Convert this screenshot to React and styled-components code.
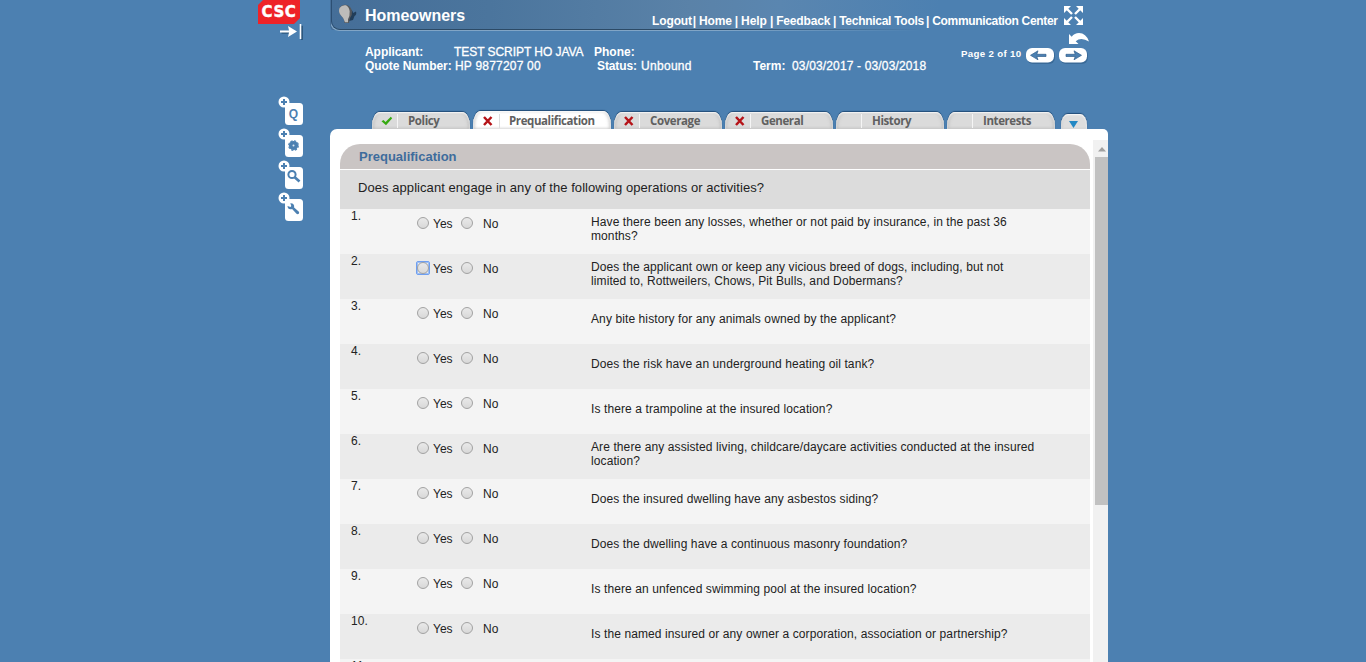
import React from "react";
import styled, { createGlobalStyle } from "styled-components";

const BLUE = "#4c80b1";

const Global = createGlobalStyle`
  * { box-sizing: border-box; }
  html, body, #root { height: 100%; }
  body {
    margin: 0;
    overflow: hidden;
    background: ${BLUE};
    font-family: "Liberation Sans", Arial, sans-serif;
    font-size: 12px;
    color: #222;
  }
  svg { display: block; flex: none; }
`;

const Page = styled.div`
  display: flex;
  width: 1366px;
  height: 662px;
  overflow: hidden;
`;

const Rail = styled.aside`
  display: flex;
  flex-direction: column;
  width: 330px;
  flex: none;
  padding-left: 257px;
`;

const Collapse = styled.div`
  margin: 0 0 0 22px;
  height: 72px;
`;

const Tool = styled.div`
  height: 32px;
  margin-left: 21px;
`;

const Main = styled.main`
  display: flex;
  flex-direction: column;
  width: 778px;
  height: 662px;
`;

const Header = styled.header`
  display: flex;
  height: 34px;
  padding-left: 8px;
  background: linear-gradient(90deg, #456e98 0, #4b759d 160px, #5a82a8 360px, #5a86b0 450px, ${BLUE} 610px);
  background-size: 778px 30px;
  background-repeat: no-repeat;
  border-radius: 0 0 0 9px;
  position: relative;
  &::after {
    content: "";
    position: absolute;
    inset: 0 0 4px 1px;
    border-left: 1px solid #2c4f73;
    border-bottom: 1px solid #2c4a66;
    border-radius: 0 0 0 9px;
    box-shadow: -1px 1px 0 #81a5c6;
    mask-image: linear-gradient(90deg, #000 390px, transparent 590px);
    mask-clip: no-clip;
  }
`;

const Title = styled.h1`
  margin: 6px 0 0 7px;
  width: 287px;
  font-size: 16px;
  line-height: 19px;
  letter-spacing: -0.03px;
  color: #fff;
`;

const Nav = styled.nav`
  display: flex;
  align-items: center;
  height: 16px;
  margin-top: 13px;
  gap: 3px;
  color: #fff;
  font-weight: bold;
  font-size: 12px;
  letter-spacing: -0.12px;
  white-space: nowrap;
`;

const NavItem = styled.span`
  width: ${(p) => p.$w}px;
  letter-spacing: ${(p) => p.$ls || -0.12}px;
`;

const Info = styled.section`
  display: flex;
  height: 77px;
  padding: 11px 0 0 35px;
  color: #fff;
  line-height: 14px;
  white-space: nowrap;
`;

const Facts = styled.div`
  width: 596px;
`;

const Fact = styled.div`
  display: flex;
`;

const Cell = styled.span`
  width: ${(p) => p.$w}px;
  font-weight: ${(p) => (p.$plain ? 400 : 700)};
  letter-spacing: ${(p) => p.$ls || 0}px;
  -webkit-text-stroke: ${(p) => (p.$plain ? "0.3px #fff" : "0")};
`;

const Pager = styled.div`
  display: flex;
  gap: 4px;
  padding-top: 3px;
  height: 24px;
`;

const PageText = styled.span`
  width: 61px;
  font: bold 9.7px/12px "Liberation Sans", Arial, sans-serif;
  letter-spacing: 0.32px;
`;

const Tabs = styled.div`
  display: flex;
  align-items: flex-end;
  height: 18px;
  padding-left: 42px;
  gap: 3px;
`;

const Tab = styled.div`
  display: flex;
  align-items: center;
  width: ${(p) => p.$w}px;
  height: ${(p) => (p.$active ? 18 : 17)}px;
  padding: ${(p) => (p.$active ? 2 : 1)}px 0 0 9px;
  border-radius: 8px 8px 0 0 / 14px 14px 0 0;
  background: ${(p) => (p.$active ? "#fff" : "#dbdbdb")};
  box-shadow: 0 -1px 1px #234d79, inset 0 1px 2px #fff, inset 2px 0 3px #aaa8, inset -2px 0 3px #aaa8;
  color: #606060;
  font: bold 11.5px "Open Sans", "Noto Sans", sans-serif;
  letter-spacing: -0.4px;
`;

const Mark = styled.span`
  width: ${(p) => (p.$active ? 18 : 17)}px;
  height: 14px;
  padding-top: 1px;
  border-right: 1px solid ${(p) => (p.$active ? "#ddd" : "#f5f5f5")};
`;

const TabLabel = styled.span`
  padding-left: ${(p) => (p.$active ? 9 : 10)}px;
  line-height: 14px;
  white-space: nowrap;
`;

const MoreTab = styled.div`
  width: 26px;
  height: 15px;
  margin-left: 3px;
  padding: 7px 0 0 8px;
  border-radius: 7px 7px 0 0 / 11px 11px 0 0;
  background: #dedede;
  box-shadow: 0 -1px 1px #234d79, inset 0 1px 2px #fff, inset 1px 0 2px #aaa8;
`;

const Panel = styled.div`
  display: flex;
  justify-content: space-between;
  flex: 1;
  min-height: 0;
  padding-left: 10px;
  background: #fff;
  border-radius: 7px 5px 0 0;
`;

const Form = styled.div`
  width: 750px;
  padding-top: 15px;
  overflow: hidden;
`;

const FormTitle = styled.h2`
  height: 25px;
  margin: 0 0 1px;
  padding-left: 19px;
  border-radius: 20px 20px 0 0;
  background: #cac5c4;
  color: #3e6c9c;
  font-size: 13px;
  line-height: 25px;
`;

const Intro = styled.div`
  height: 39px;
  padding-left: 18px;
  background: #dcdcdc;
  font-size: 13px;
  line-height: 36px;
  letter-spacing: 0.06px;
`;

const Row = styled.div`
  display: flex;
  height: 45px;
  padding-left: 11px;
  background: ${(p) => (p.$odd ? "#ebebeb" : "#f4f4f4")};
`;

const Num = styled.span`
  width: 66px;
  line-height: 14px;
  letter-spacing: 0.1px;
`;

const Choices = styled.div`
  display: flex;
  align-items: flex-start;
  width: 174px;
  padding-top: 8px;
`;

const Radio = styled.span`
  width: 12px;
  height: 12px;
  border: 1px solid #a2a2a2;
  border-radius: 50%;
  background: linear-gradient(#e9e9e9, #d8d8d8);
`;

const Focus = styled.span`
  display: flex;
  margin: ${(p) => (p.$on ? "-1px -1px 0 -1px" : "0")};
  border: ${(p) => (p.$on ? "1px solid #6f9ff0" : "0")};
  border-radius: 2px;
  box-shadow: ${(p) => (p.$on ? "inset 0 0 0 1px #9fc0f5" : "none")};
`;

const Choice = styled.span`
  width: ${(p) => p.$w}px;
  padding-left: ${(p) => p.$pl}px;
  line-height: 14px;
`;

const Question = styled.p`
  display: flex;
  align-items: center;
  height: 40px;
  margin: 0;
  line-height: 14px;
  letter-spacing: 0.1px;
  white-space: pre;
`;

const Scroll = styled.div`
  width: 15px;
  margin-top: 11px;
  background: #f1f1f1;
`;

const ScrollUp = styled.div`
  display: flex;
  height: 17px;
  padding: 7px 0 0 5px;
`;

const Thumb = styled.div`
  height: 348px;
  margin-left: 2px;
  background: #c1c1c1;
`;

const LogoBox = styled.div`
  display: flex;
  width: 44px;
  height: 24px;
  padding-left: 1px;
`;

const LogoText = styled.span`
  display: flex;
  align-items: center;
  justify-content: center;
  width: 42px;
  height: 24px;
  background: #ee2328;
  clip-path: polygon(5px 0, 100% 0, 100% 18px, 36px 100%, 0 100%, 0 5px);
  color: #fff;
  font: bold 15px "DejaVu Sans", sans-serif;
  letter-spacing: 0.6px;
  -webkit-text-stroke: 0.4px #fff;
`;

const glyphs = {
  q: <text x="15" y="21" textAnchor="middle" fontSize="12" fontWeight="bold" fontFamily="Liberation Sans" fill={BLUE}>Q</text>,
  gear: (
    <g>
      <circle cx="15" cy="17" r="4.6" fill={BLUE} />
      <circle cx="15" cy="17" r="4.8" fill="none" stroke={BLUE} strokeWidth="1.2" strokeDasharray="2.2 1.57" />
      <circle cx="15" cy="17" r="1" fill="#dfe9f2" />
    </g>
  ),
  search: (
    <g fill="none" stroke={BLUE}>
      <circle cx="13.5" cy="14" r="3.6" strokeWidth="2" />
      <path d="M16.200 16.700L21 21" strokeWidth="2.6" />
    </g>
  ),
  wrench: (
    <path d="M9 13.500l3 1 .8-1-1-2.700c3-.2 4.300 1.800 3.800 4.200l4.800 4.200c1 1.700-1 3.200-2.400 2l-4.400-4.700C11 17.600 9 16 9 13.500z" fill={BLUE} />
  ),
};

const ToolIcon = ({ kind }) => (
  <Tool>
    <svg width="27" height="31" viewBox="0 0 27 31">
      <rect x="7" y="7" width="18" height="22" rx="3.5" fill="#fff" />
      <circle cx="6" cy="6" r="5.5" fill="#fff" />
      <path d="M3 6h6M6 3v6" stroke={BLUE} strokeWidth="2" />
      <g transform="translate(0.5 0.5)">{glyphs[kind]}</g>
    </svg>
  </Tool>
);

const Check = () => (
  <svg width="12" height="12" viewBox="0 0 12 12">
    <path d="M0.500 6.300l2-1.400 2 2L9.800 1.800l1.400 1.400L5 10.300z" fill="#36a911" />
  </svg>
);

const Cross = () => (
  <svg width="11" height="12" viewBox="0 0 11 12">
    <path d="M2 2l7.500 8M9.500 2L2 10" stroke="#b51318" strokeWidth="2.5" />
  </svg>
);

const PageArrow = ({ flip }) => (
  <svg width="29" height="17" viewBox="0 0 29 17">
    <rect x="1" y="1" width="28" height="15" rx="6" fill="#3a6a98" />
    <rect width="28" height="14.5" rx="6" fill="#fff" />
    <path
      d="M4.500 7.300L12 2.800 10.800 6.300H20v2.200h-9.200L12 11.800z"
      fill={BLUE}
      stroke="#315f8c"
      strokeWidth=".7"
      transform={flip ? "translate(27 0) scale(-1 1)" : undefined}
    />
  </svg>
);

const HeadIcon = () => (
  <svg width="20" height="28" viewBox="0 0 20 28">
    <path d="M11 9q4 1 4 4l3-1.500q1 3-1.500 4.500L15 20l-4 1z" fill="#213d58" />
    <path d="M1.500 8Q4 4 9 5q4 1.500 5 6 .500 4-2 7l-1 5H6.500Q6 18 3 15.500 0 12 1.500 8z" fill="#55585c" />
    <path d="M1.500 8Q4 4.500 8 5.300q3 1.500 3.700 6 .300 5-1.700 8v3H7Q6 18 3 15.500 0 12 1.500 8z" fill="#bdbcba" />
  </svg>
);

const CornerIcons = styled.div`
  position: absolute;
  left: 733px;
  top: 5px;
`;

const tabs = [
  ["Policy", 98, "check"],
  ["Prequalification", 138, "cross"],
  ["Coverage", 108, "cross"],
  ["General", 108, "cross"],
  ["History", 108, ""],
  ["Interests", 108, ""],
];

const questions = [
  "Have there been any losses, whether or not paid by insurance, in the past 36\nmonths?",
  "Does the applicant own or keep any vicious breed of dogs, including, but not\nlimited to, Rottweilers, Chows, Pit Bulls, and Dobermans?",
  "Any bite history for any animals owned by the applicant?",
  "Does the risk have an underground heating oil tank?",
  "Is there a trampoline at the insured location?",
  "Are there any assisted living, childcare/daycare activities conducted at the insured\nlocation?",
  "Does the insured dwelling have any asbestos siding?",
  "Does the dwelling have a continuous masonry foundation?",
  "Is there an unfenced swimming pool at the insured location?",
  "Is the named insured or any owner a corporation, association or partnership?",
];

export default function App() {
  return (
    <Page>
      <Global />
      <Rail>
        <LogoBox><LogoText>CSC</LogoText></LogoBox>
        <Collapse>
          <svg width="24" height="16" viewBox="0 0 24 16">
            <path d="M2 8h11M22.500 1v15" stroke="#2d587f" strokeWidth="2" transform="translate(.5 .8)" />
            <path d="M1 6.500h9l-1-4.500 9 5.500L9 13l1-4.500H1z" fill="#fff" />
            <path d="M21.500 0v15" stroke="#fff" strokeWidth="1.600" />
          </svg>
        </Collapse>
        <ToolIcon kind="q" />
        <ToolIcon kind="gear" />
        <ToolIcon kind="search" />
        <ToolIcon kind="wrench" />
      </Rail>
      <Main>
        <Header>
          <HeadIcon />
          <Title>Homeowners</Title>
          <Nav>
            <NavItem $w={37.8}>Logout</NavItem>|
            <NavItem $w={32.8}>Home</NavItem>|
            <NavItem $w={25.8}>Help</NavItem>|
            <NavItem $w={53.8} $ls={-0.16}>Feedback</NavItem>|
            <NavItem $w={83.8} $ls={-0.28}>Technical Tools</NavItem>|
            <NavItem $w={126} $ls={-0.33}>Communication Center</NavItem>
          </Nav>
          <CornerIcons>
            <svg width="26" height="42" viewBox="0 0 26 42">
              <path d="M4 4l5 5M17 4l-5 5M4 17l5-5M17 17l-5-5" stroke="#fff" strokeWidth="2.4" />
              <path d="M1 1h7L1 8zM20 1v7l-7-7zM1 20v-7l7 7zM20 20h-7l7-7z" fill="#fff" />
              <path d="M6 29v10h9.500L12.700 36.200Q18 31.500 26 36.500 23 28 16 28 11.500 28 8.700 31.700z" fill="#fff" />
            </svg>
          </CornerIcons>
        </Header>
        <Info>
          <Facts>
            <Fact>
              <Cell $w={89} $ls={-0.05}>Applicant:</Cell>
              <Cell $w={140} $plain $ls={-0.05}>TEST SCRIPT HO JAVA</Cell>
              <Cell $w={60}>Phone:</Cell>
            </Fact>
            <Fact>
              <Cell $w={90} $ls={-0.05}>Quote Number:</Cell>
              <Cell $w={142} $plain $ls={0.2}>HP 9877207 00</Cell>
              <Cell $w={44} $ls={-0.1}>Status:</Cell>
              <Cell $w={112} $plain $ls={0.3}>Unbound</Cell>
              <Cell $w={39}>Term:</Cell>
              <Cell $w={140} $plain $ls={0.15}>03/03/2017 - 03/03/2018</Cell>
            </Fact>
          </Facts>
          <Pager>
            <PageText>Page 2 of 10</PageText>
            <PageArrow />
            <PageArrow flip />
          </Pager>
        </Info>
        <Tabs>
          {tabs.map(([label, w, mark]) => {
            const active = label === "Prequalification";
            return (
              <Tab key={label} $w={w} $active={active}>
                <Mark $active={active}>
                  {mark === "check" && <Check />}
                  {mark === "cross" && <Cross />}
                </Mark>
                <TabLabel $active={active}>{label}</TabLabel>
              </Tab>
            );
          })}
          <MoreTab>
            <svg width="9" height="7" viewBox="0 0 9 7">
              <path d="M0 0h9L4.500 7z" fill="#2288c4" />
            </svg>
          </MoreTab>
        </Tabs>
        <Panel>
          <Form>
            <FormTitle>Prequalification</FormTitle>
            <Intro>Does applicant engage in any of the following operations or activities?</Intro>
            {questions.map((q, i) => (
              <Row key={i} $odd={i % 2 === 1}>
                <Num>{i + 1}.</Num>
                <Choices>
                  <Focus $on={i === 1}><Radio /></Focus>
                  <Choice $w={32} $pl={4}>Yes</Choice>
                  <Radio />
                  <Choice $w={40} $pl={10}>No</Choice>
                </Choices>
                <Question>{q}</Question>
              </Row>
            ))}
            <Row>
              <Num>11.</Num>
            </Row>
          </Form>
          <Scroll>
            <ScrollUp>
              <svg width="8" height="5" viewBox="0 0 8 5"><path d="M4 0l4 4.500H0z" fill="#a0a0a0" /></svg>
            </ScrollUp>
            <Thumb />
          </Scroll>
        </Panel>
      </Main>
    </Page>
  );
}
